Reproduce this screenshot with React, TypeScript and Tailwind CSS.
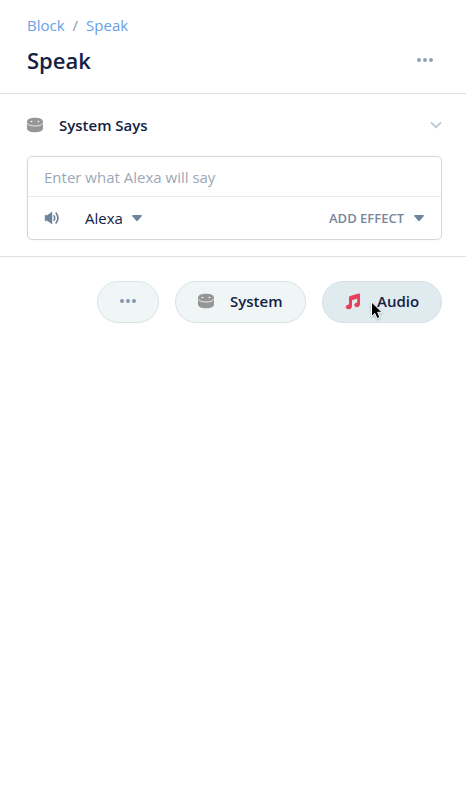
import React from "react";

function Dots({ className = "" }: { className?: string }) {
  return (
    <svg width="16" height="4" viewBox="0 0 16 4" fill="currentColor" className={className}>
      <circle cx="2" cy="2" r="1.950" />
      <circle cx="8" cy="2" r="1.950" />
      <circle cx="14" cy="2" r="1.950" />
    </svg>
  );
}

function SystemIcon() {
  return (
    <svg width="16" height="16" viewBox="0 0 16 16" className="shrink-0">
      <path d="M0 4.800C0 2 3.400 0.700 8 0.700s8 1.300 8 4.100v6.400C16 14 12.600 15.300 8 15.300S0 14 0 11.200Z" fill="#969696" />
      <path d="M0.300 6.200C1.200 8.300 4.200 9 8 9s6.800-.7 7.700-2.800" fill="none" stroke="#f2f2f2" strokeWidth="0.900" />
      <ellipse cx="4.500" cy="4.500" rx="0.900" ry="0.700" fill="#fff" />
      <ellipse cx="11.500" cy="4.500" rx="0.900" ry="0.700" fill="#fff" />
    </svg>
  );
}

function MusicIcon() {
  return (
    <svg width="16" height="17" viewBox="0 0 16 17" fill="#e83f5b" className="shrink-0">
      <path d="M5.200 2.900 13.500 0.500Q15 0.200 15 1.700V11.100C15 13 13.600 14.200 12 14.200S9.300 13.300 9.300 12.100 10.400 9.900 12.200 9.600V5.600L7 7.200V13C7 15 5.500 16.300 3.700 16.300S0.700 15.300 0.700 14.100 1.900 11.900 4 11.600V4.500Q4 3.300 5.200 2.900Z" />
    </svg>
  );
}

function SpeakerIcon() {
  return (
    <svg width="16" height="14" viewBox="0 0 16 14" className="shrink-0 text-[#6e849a]">
      <path d="M1.100 4.300h2.400L8 1v12L3.500 9.700H1.100Z" fill="currentColor" stroke="currentColor" strokeWidth="0.500" strokeLinejoin="round" />
      <path d="M9.700 4.200q2 2.800 0 5.600M11.700 1.500q4.600 5.500 0 11" fill="none" stroke="currentColor" strokeWidth="1.600" />
    </svg>
  );
}

function Caret() {
  return (
    <svg width="10" height="7" viewBox="0 0 10 7" fill="#6e849a" className="shrink-0">
      <path d="M1 0h8q1.300.2.600 1.200L6 5.400Q5 6.400 4 5.400L.4 1.200Q-.3.200 1 0Z" />
    </svg>
  );
}

function Pointer() {
  return (
    <svg width="14" height="20" viewBox="0 0 14 20" className="pointer-events-none absolute left-[47px] top-[19px] drop-shadow-[0_1px_1px_rgba(0,0,0,0.25)]">
      <path
        d="M1.500 1V15.500L4.900 12.500 7 17.600 9.900 16.400 7.700 11.300H12.100Z"
        fill="#000"
        stroke="#fff"
        strokeWidth="1"
        strokeLinejoin="round"
      />
    </svg>
  );
}

export default function App() {
  return (
    <div className="min-h-[807px] w-full bg-white font-['Open_Sans',sans-serif] text-[15px] text-[#132144]">
      <header className="flex h-[94px] flex-col border-b border-[#dfe2e5] pt-3.5 pr-6 pl-[27px]">
        <nav className="flex h-[22px] items-center gap-2 leading-[22px] text-[#659fe8]">
          <a>Block</a>
          <span className="text-[#8c99ab]">/</span>
          <a>Speak</a>
        </nav>
        <div className="mt-[9px] flex h-[30px] items-center justify-between">
          <h1 className="text-[22px] leading-[30px] font-semibold">Speak</h1>
          <button className="mr-[9px] text-[#8da0b4]">
            <Dots className="block" />
          </button>
        </div>
      </header>

      <section className="h-[163px] border-b border-[#dfe2e5] pr-6 pl-[27px]">
        <div className="flex h-[62px] items-center">
          <SystemIcon />
          <h2 className="ml-4 font-semibold">System Says</h2>
          <svg width="12" height="8" viewBox="0 0 12 8" className="ml-auto" fill="none" stroke="#becad7" strokeWidth="1.900">
            <path d="M1 1.500 6 6.200 11 1.500" />
          </svg>
        </div>
        <div className="h-[84px] rounded-[5px] border border-[#d2dadc] shadow-[0_0_2px_rgba(17,49,96,0.08)]">
          <div className="flex h-10 items-center border-b border-[#e7ebed] px-4 pt-0.5 text-[#9ba8b8]">
            Enter what Alexa will say
          </div>
          <div className="flex h-[42px] items-center pr-[17px] pl-4">
            <SpeakerIcon />
            <span className="mr-[9px] ml-[25px]">Alexa</span>
            <Caret />
            <span className="mr-[10px] ml-auto pt-0.5 text-[13px] font-semibold text-[#77879a]">
              ADD EFFECT
            </span>
            <Caret />
          </div>
        </div>
      </section>

      <div className="flex justify-end gap-4 pt-6 pr-6 font-semibold">
        <button className="flex h-[42px] w-[62px] items-center justify-center rounded-full border border-[#d9e4e8] bg-[#f0f6f6] pb-[2px] text-[#8295ac]">
          <Dots />
        </button>
        <button className="flex h-[42px] w-[131px] items-center rounded-full border border-[#d9e4e8] bg-[#f0f6f6] pb-0.5 pl-[22px]">
          <SystemIcon />
          <span className="ml-4">System</span>
        </button>
        <button className="relative flex h-[42px] w-[120px] items-center rounded-full border border-[#d5e3e6] bg-[#dfebef] pb-0.5 pl-[22px]">
          <MusicIcon />
          <span className="ml-4">Audio</span>
          <Pointer />
        </button>
      </div>
    </div>
  );
}
